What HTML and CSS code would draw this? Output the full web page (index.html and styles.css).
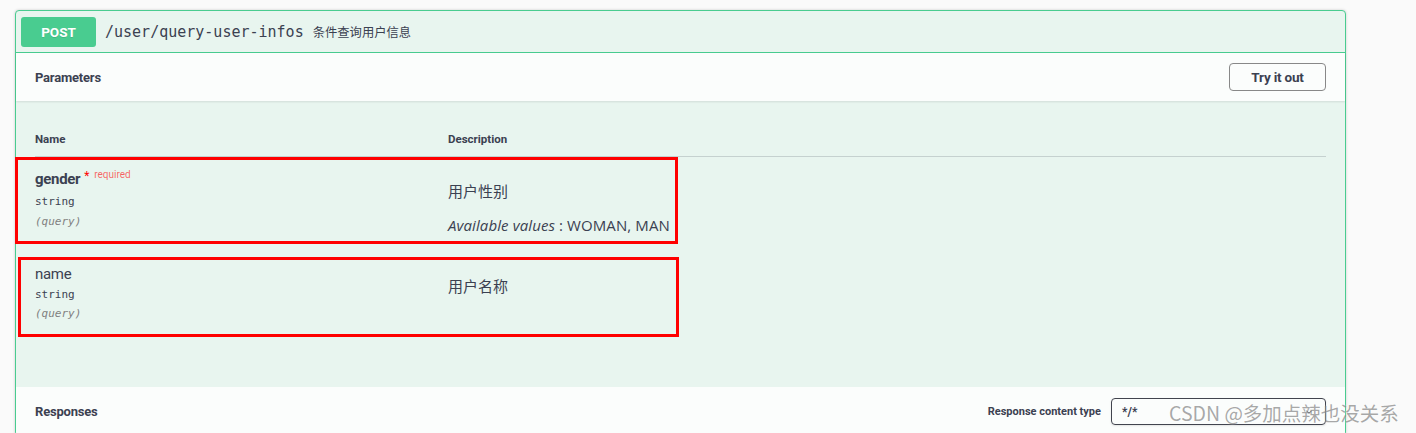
FILE: index.html
```html
<!DOCTYPE html>
<html lang="zh">
<head>
<meta charset="utf-8">
<title>query-user-infos</title>
<link rel="stylesheet" href="styles.css">
</head>
<body>
<div class="page">
  <div class="opblock">
    <div class="summary">
      <span class="method">POST</span>
      <span class="path">/user/query-user-infos</span>
      <span class="summary-desc">条件查询用户信息</span>
    </div>
    <div class="section-header">
      <h4 class="title">Parameters</h4>
      <button class="try-out">Try it out</button>
    </div>
    <div class="params">
      <div class="param-table">
        <div class="th">Name</div>
        <div class="th">Description</div>

        <div class="cell name-cell row1">
          <div class="pname req">gender<span class="star">*</span><span class="req-text">required</span></div>
          <div class="ptype">string</div>
          <div class="pin">(query)</div>
        </div>
        <div class="cell desc-cell row1">
          <p class="d1">用户性别</p>
          <p class="d2"><i>Available values</i> : WOMAN, MAN</p>
        </div>

        <div class="cell name-cell row2">
          <div class="pname">name</div>
          <div class="ptype">string</div>
          <div class="pin">(query)</div>
        </div>
        <div class="cell desc-cell row2">
          <p class="d1">用户名称</p>
        </div>
      </div>
      <div class="mark mark1"></div>
      <div class="mark mark2"></div>
    </div>
    <div class="section-header responses">
      <h4 class="title">Responses</h4>
      <div class="ctype">
        <span class="ctype-label">Response content type</span>
        <div class="select">
          <span>*/*</span>
          <svg class="chev" width="12" height="12" viewBox="0 0 20 20"><path d="M13.418 7.859a.695.695 0 0 1 .978 0 .68.68 0 0 1 0 .969l-3.908 3.83a.697.697 0 0 1-.979 0l-3.908-3.83a.68.68 0 0 1 0-.969.695.695 0 0 1 .978 0L10 11z" fill="#3b4151"/></svg>
        </div>
      </div>
    </div>
  </div>
  <div class="watermark">CSDN @多加点辣也没关系</div>
</div>
</body>
</html>
```

FILE: styles.css
```css
* { box-sizing: border-box; }
html, body { margin: 0; padding: 0; }
body {
  background: #fafafa;
  color: #3b4151;
  font-family: "Open Sans", "Noto Sans CJK SC", sans-serif;
  width: 1416px;
  height: 433px;
  overflow: hidden;
}
.page {
  position: relative;
  padding-top: 10px;
  height: 433px;
}
.opblock {
  position: relative;
  margin-left: 15px;
  width: 1331px;
  border: 1px solid #49cc90;
  border-radius: 4px;
  background: #e8f5ef;
  box-shadow: 0 0 3px rgba(0,0,0,.19);
}
.summary {
  display: flex;
  align-items: center;
  height: 42px;
  padding: 0 5px;
  border-bottom: 1px solid #49cc90;
}
.method {
  width: 75px;
  height: 30px;
  border-radius: 3px;
  background: #49cc90;
  color: #fff;
  font-family: "Roboto", sans-serif;
  font-weight: 700;
  font-size: 13.5px;
  display: flex;
  align-items: center;
  justify-content: center;
  text-shadow: 0 1px 0 rgba(0,0,0,.1);
}
.path {
  margin-left: 9px;
  font-family: "DejaVu Sans Mono", monospace;
  font-size: 15px;
  color: #3b4151;
}
.summary-desc {
  margin-left: 9px;
  font-family: "Noto Sans CJK SC", sans-serif;
  font-size: 12.3px;
  color: #3b4151;
}
.section-header {
  display: flex;
  align-items: center;
  justify-content: space-between;
  height: 48px;
  padding: 0 19px 0 19px;
  background: rgba(255,255,255,.8);
  box-shadow: 0 1px 2px rgba(0,0,0,.1);
}
.title {
  margin: 0;
  font-family: "Roboto", sans-serif;
  font-size: 13px;
  font-weight: 700;
  letter-spacing: -0.2px;
  color: #3b4151;
}
.try-out {
  width: 97px;
  height: 28px;
  border: 1.5px solid #888;
  border-radius: 4px;
  background: transparent;
  color: #3b4151;
  font-family: "Roboto", sans-serif;
  font-weight: 700;
  font-size: 13.5px;
  letter-spacing: -0.2px;
  padding: 0;
}
.params {
  position: relative;
  height: 286px;
  padding: 28px 19px 0 19px;
}
.param-table {
  display: grid;
  grid-template-columns: 413px 1fr;
}
.th {
  font-family: "Roboto", sans-serif;
  font-size: 11.5px;
  font-weight: 700;
  line-height: 20px;
  padding-bottom: 7px;
  border-bottom: 1px solid rgba(59,65,81,.2);
}
.cell { padding-top: 11px; }
.pname {
  margin-top: 1px;
  font-family: "Roboto", sans-serif;
  font-size: 15px;
  line-height: 20px;
  letter-spacing: -0.3px;
  color: #3b4151;
}
.pname.req { font-weight: 700; }
.star {
  color: red;
  font-size: 12px;
  position: relative;
  top: -4px;
  margin-left: 4px;
  font-weight: 400;
}
.req-text {
  color: rgba(255,0,0,.6);
  font-size: 10px;
  font-weight: 400;
  position: relative;
  top: -6px;
  margin-left: 5px;
  letter-spacing: 0;
}
.ptype {
  margin-top: 3px;
  font-family: "DejaVu Sans Mono", monospace;
  font-size: 11px;
  line-height: 16px;
}
.pin {
  margin-top: 3px;
  font-family: "DejaVu Sans Mono", monospace;
  font-size: 11px;
  line-height: 16px;
  font-style: italic;
  color: gray;
}
.name-cell.row1 .pin { margin-top: 4px; }
.desc-cell p {
  margin: 0;
  font-family: "Open Sans", "Noto Sans CJK SC", sans-serif;
  font-size: 15px;
  line-height: 20px;
  color: #3b4151;
}
.desc-cell .d1 { margin-top: 13px; }
.desc-cell .d2 { margin-top: 14px; letter-spacing: 0.1px; }
.desc-cell.row1 { padding-bottom: 17px; }
.mark {
  position: absolute;
  border: 3px solid #ff0000;
}
.mark1 { left: -1px; top: 56px; width: 663px; height: 87px; }
.mark2 { left: 2px; top: 156px; width: 661px; height: 80px; }
.responses {
  box-shadow: none;
  padding-top: 1px;
}
.ctype {
  display: flex;
  align-items: center;
  gap: 10px;
}
.ctype-label {
  font-family: "Roboto", sans-serif;
  font-size: 11px;
  font-weight: 700;
}
.select {
  width: 215px;
  height: 27px;
  border: 1.5px solid #41444e;
  border-radius: 4px;
  display: flex;
  align-items: center;
  justify-content: space-between;
  padding: 0 10px 0 10px;
  font-family: "Roboto", sans-serif;
  font-size: 12px;
  font-weight: 700;
  box-shadow: 0 1px 2px rgba(0,0,0,.1);
}
.watermark {
  position: absolute;
  left: 1169px;
  top: 400px;
  font-family: "Noto Sans CJK SC", sans-serif;
  font-size: 19.5px;
  line-height: 26px;
  color: rgba(110,110,110,.6);
  text-shadow: 0 0 2px rgba(255,255,255,.6);
  white-space: nowrap;
}
```
